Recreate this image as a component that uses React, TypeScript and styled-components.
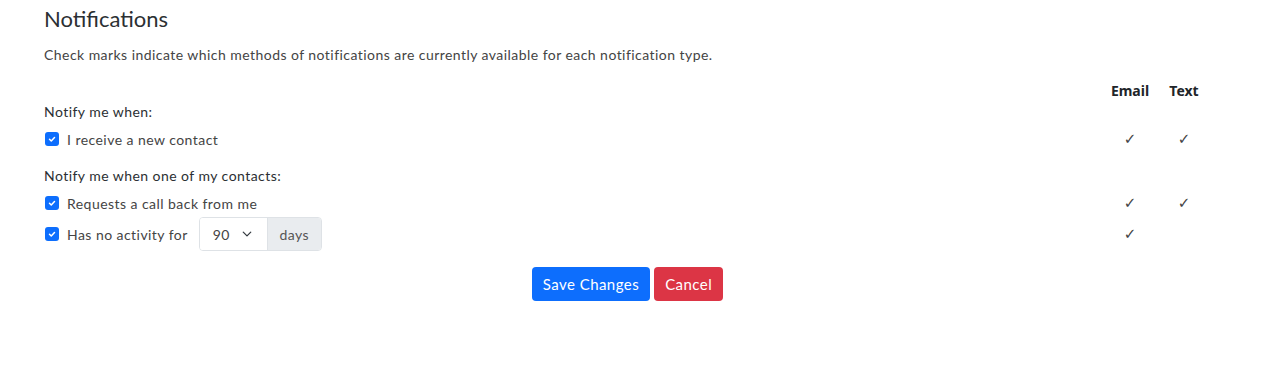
import React from "react";
import styled, { createGlobalStyle } from "styled-components";

const GlobalStyle = createGlobalStyle`
  html, body { margin: 0; padding: 0; background: #ffffff; }
  body {
    font-family: "Lato", "Open Sans", sans-serif;
    font-size: 14px;
    letter-spacing: 0.45px;
    color: #212529;
  }
  * { box-sizing: border-box; }
`;

const Page = styled.div`
  padding: 0 53px 0 44px;
`;

const Title = styled.h4`
  margin: 6px 0 0;
  font-size: 22px;
  line-height: 26px;
  font-weight: 400;
  letter-spacing: 0;
  color: #2b2f33;
`;

const Lead = styled.p`
  margin: 12px 0 0;
  font-size: 14px;
  line-height: 21px;
  color: #444;
`;

const Grid = styled.div`
  display: grid;
  grid-template-columns: 1fr 54px 54px;
  margin-top: 14px;
`;

const Cell = styled.div<{ $h: number; $mt?: number }>`
  height: ${(p) => p.$h}px;
  margin-top: ${(p) => p.$mt ?? 0}px;
  display: flex;
  align-items: center;
`;

const HeadCell = styled(Cell)`
  justify-content: center;
  font-family: "Noto Sans", "Open Sans", sans-serif;
  font-weight: 700;
  font-size: 14px;
  letter-spacing: 0;
  color: #212529;
`;

const MarkCell = styled(Cell)`
  justify-content: center;
  font-family: "DejaVu Sans", sans-serif;
  font-size: 15px;
  letter-spacing: 0;
  color: #444;
`;

const SectionLabel = styled(Cell)`
  grid-column: 1 / -1;
  color: #2b2f33;
`;

const CheckRow = styled(Cell)`
  gap: 8px;
  color: #444;
  padding-left: 1px;
`;

const Box = styled.span`
  width: 14px;
  height: 14px;
  border-radius: 3px;
  background: #0d6efd;
  display: inline-flex;
  align-items: center;
  justify-content: center;
  flex: none;
`;

const InputGroup = styled.div`
  display: flex;
  height: 34px;
  margin-left: 3px;
  border: 1px solid #dee2e6;
  border-radius: 4px;
  overflow: hidden;
`;

const Select = styled.div`
  width: 68px;
  display: flex;
  align-items: center;
  justify-content: space-between;
  padding: 0 15px 0 13px;
  color: #444;
  background: #fff;
  border-right: 1px solid #dee2e6;
`;

const Addon = styled.div`
  width: 53px;
  display: flex;
  align-items: center;
  justify-content: center;
  background: #e9ecef;
  color: #555;
`;

const Actions = styled.div`
  display: flex;
  justify-content: center;
  gap: 4px;
  margin-top: 16px;
`;

const Button = styled.button<{ $variant: "primary" | "danger" }>`
  height: 34px;
  padding: 0 11px;
  border: none;
  border-radius: 4px;
  font-family: "Lato", "Open Sans", sans-serif;
  font-size: 15px;
  letter-spacing: 0.45px;
  color: #fff;
  background: ${(p) => (p.$variant === "primary" ? "#0d6efd" : "#dc3545")};
`;

const Check = () => (
  <Box>
    <svg width="10" height="10" viewBox="0 0 20 20">
      <path d="M5 10.5l3.5 3.5l6.5-7" fill="none" stroke="#fff" strokeWidth="3" strokeLinecap="round" strokeLinejoin="round" />
    </svg>
  </Box>
);

const Chevron = () => (
  <svg width="10" height="10" viewBox="0 0 16 16">
    <path d="M2 5l6 6 6-6" fill="none" stroke="#343a40" strokeWidth="2" strokeLinecap="round" strokeLinejoin="round" />
  </svg>
);

export default function App() {
  return (
    <>
      <GlobalStyle />
      <Page>
        <Title>Notifications</Title>
        <Lead>Check marks indicate which methods of notifications are currently available for each notification type.</Lead>
        <Grid>
          <Cell $h={22} />
          <HeadCell $h={22}>Email</HeadCell>
          <HeadCell $h={22}>Text</HeadCell>

          <SectionLabel $h={21}>Notify me when:</SectionLabel>

          <CheckRow $h={28} $mt={3}>
            <Check />
            I receive a new contact
          </CheckRow>
          <MarkCell $h={28} $mt={3}>✓</MarkCell>
          <MarkCell $h={28} $mt={3}>✓</MarkCell>

          <SectionLabel $h={22} $mt={11}>Notify me when one of my contacts:</SectionLabel>

          <CheckRow $h={28} $mt={3}>
            <Check />
            Requests a call back from me
          </CheckRow>
          <MarkCell $h={28} $mt={3}>✓</MarkCell>
          <MarkCell $h={28} $mt={3}>✓</MarkCell>

          <CheckRow $h={34}>
            <Check />
            Has no activity for
            <InputGroup>
              <Select>
                <span>90</span>
                <Chevron />
              </Select>
              <Addon>days</Addon>
            </InputGroup>
          </CheckRow>
          <MarkCell $h={34}>✓</MarkCell>
          <MarkCell $h={34} />
        </Grid>
        <Actions>
          <Button $variant="primary">Save Changes</Button>
          <Button $variant="danger">Cancel</Button>
        </Actions>
      </Page>
    </>
  );
}
